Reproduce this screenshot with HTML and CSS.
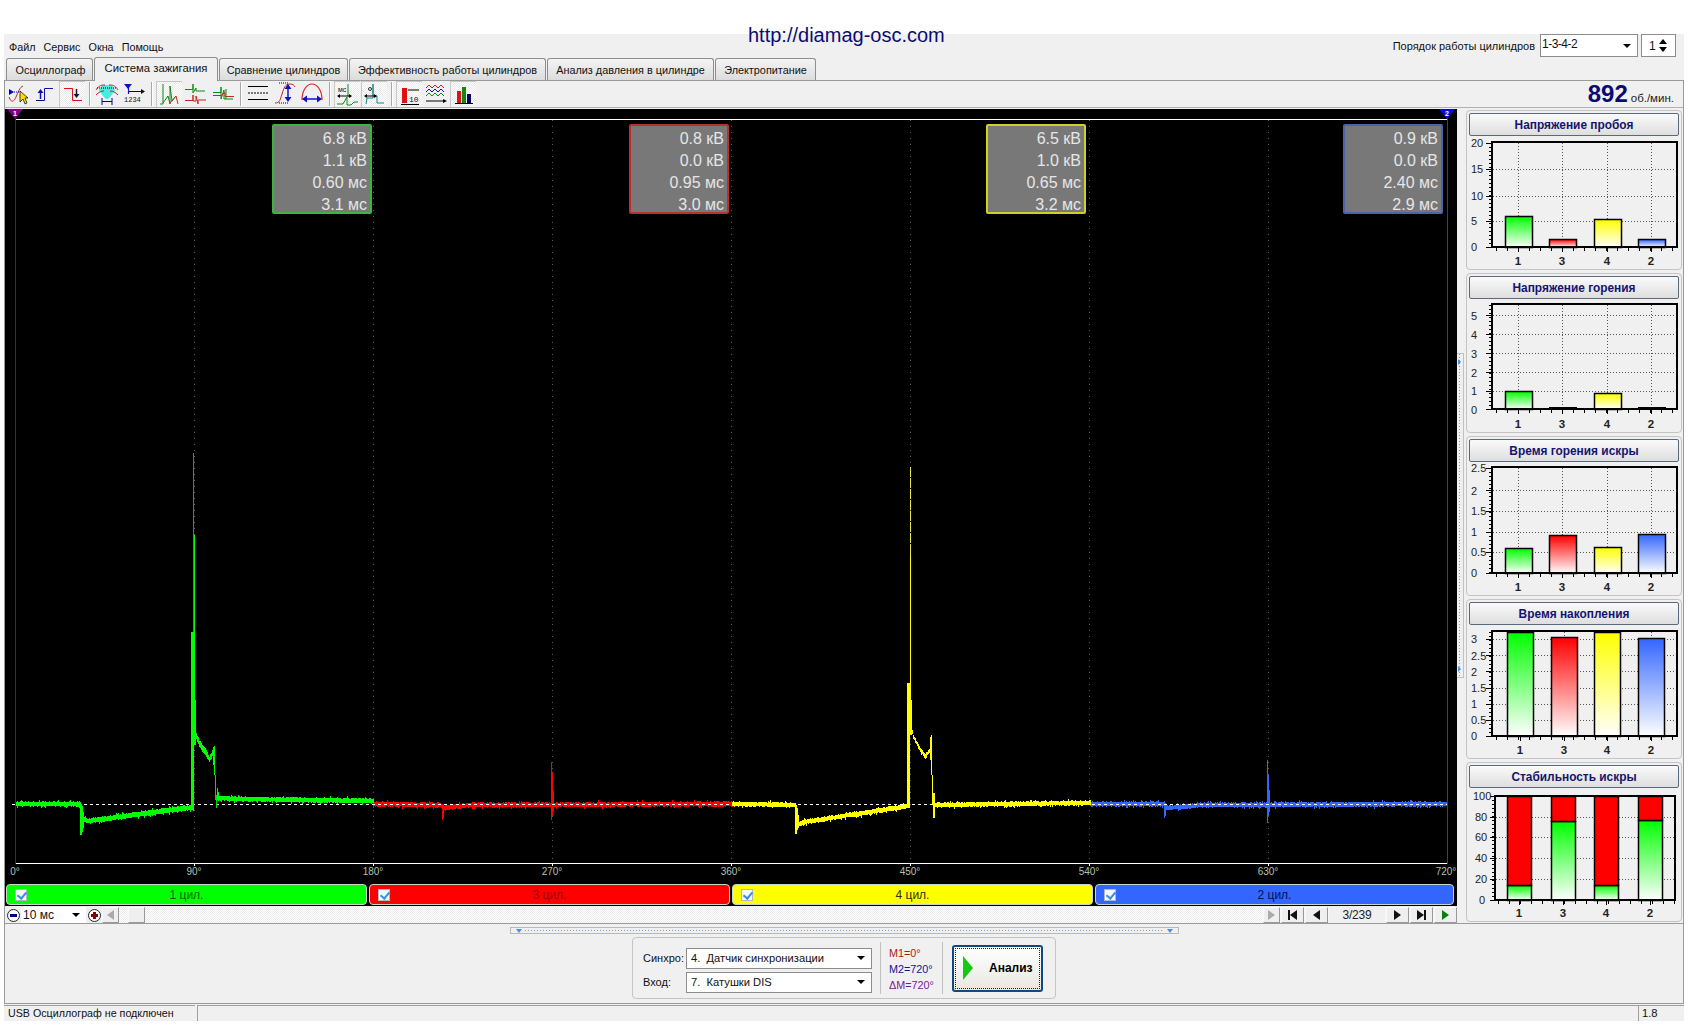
FILE: index.html
```html
<!DOCTYPE html>
<html lang="ru">
<head>
<meta charset="utf-8">
<title>Diamag</title>
<link rel="stylesheet" href="styles.css">
</head>
<body>
<div class="url">http://diamag-osc.com</div>
<div class="app">
  <div class="topbar">
    <nav class="menu"><span>Файл</span><span>Сервис</span><span>Окна</span><span>Помощь</span></nav>
    <div class="order">
      <span class="order-label">Порядок работы цилиндров</span>
      <div class="combo order-combo"><span>1-3-4-2</span><i class="caret"></i></div>
      <div class="spin"><span>1</span><i class="spin-arrows"></i></div>
    </div>
  </div>
  <div class="tabs">
    <div class="tab t1">Осциллограф</div>
    <div class="tab t2 active">Система зажигания</div>
    <div class="tab t3">Сравнение цилиндров</div>
    <div class="tab t4">Эффективность работы цилиндров</div>
    <div class="tab t5">Анализ давления в цилиндре</div>
    <div class="tab t6">Электропитание</div>
  </div>
  <div class="frame">
    <div class="toolbar">
      <div class="tools">
        <button class="tool"><svg viewBox="0 0 24 24"><path d="M3 16c2 6 5 5 7 0s4-10 7-11" stroke="#c22" fill="none"/><path d="M3 8l5 3-5 3z" fill="#00c"/><path d="M8 11h7" stroke="#00c" stroke-dasharray="1 1"/><path d="M14 10v11l3-3 2 5 2-1-2-5h3z" fill="#fd0" stroke="#000" stroke-width=".7"/></svg></button>
        <button class="tool"><svg viewBox="0 0 24 24"><path d="M4 19.500h7.500V7.500H20" stroke="#11a" fill="none"/><path d="M7.500 18V11" stroke="#11a" stroke-width="1.500"/><path d="M4.500 12l3-4 3 4z" fill="#11a"/><path d="M3 19.500h6" stroke="#006" stroke-width="1"/></svg></button>
        <button class="tool on"><svg viewBox="0 0 24 24"><path d="M3 6.500h8.500v12H21" stroke="#d11" fill="none"/><path d="M15.500 7v6" stroke="#114" stroke-width="1.500"/><path d="M12.500 12l3 4 3-4z" fill="#114"/></svg></button>
        <i class="sep"></i>
        <button class="tool"><svg viewBox="0 0 24 24"><path d="M7 4h10l3 5-4 6-3 3h-2l-3-3-4-6z" fill="#4fe8e0"/><path d="M1 9c3-5 6-5 9-5M23 9c-3-5-6-5-9-5M1 14c3-3 5-4 8-4M23 14c-3-3-5-4-8-4" stroke="#c22" fill="none"/><path d="M2 7h20" stroke="#000" stroke-dasharray="1 1"/><path d="M7 20.500h10" stroke="#00a"/><path d="M7 17v7M17 17v7" stroke="#00a"/></svg></button>
        <button class="tool"><svg viewBox="0 0 24 24"><path d="M2 3h8l-4 5z" fill="#11c"/><path d="M6.500 6v7" stroke="#11c" stroke-width="1.200"/><path d="M7 10.500h12" stroke="#111"/><path d="M19 8l4 2.500-4 2.500z" fill="#111"/><text class="tool-num" x="2" y="21">1234</text></svg></button>
        <i class="sep"></i>
        <button class="tool on"><svg viewBox="0 0 24 24"><path d="M2 22h3V2" stroke="#181" fill="none"/><path d="M5 21l5-7 2 8V4l2 15 4-5" stroke="#181" fill="none"/><path d="M12 21l6-7 2 8" stroke="#c22" fill="none"/></svg></button>
        <button class="tool"><svg viewBox="0 0 24 24"><path d="M1 8.500h8V3v9l3-5v3h9" stroke="#181" fill="none"/><path d="M1 19.500h8V14v6h3v-5l2 8v-4h8" stroke="#c22" fill="none"/></svg></button>
        <button class="tool"><svg viewBox="0 0 24 24"><path d="M2 11.500h8V6v12l3-9v9h9" stroke="#181" fill="none"/><path d="M2 14.500h8l4-3v4h9" stroke="#c22" fill="none"/><path d="M15 8v10" stroke="#181"/></svg></button>
        <i class="sep"></i>
        <button class="tool"><svg viewBox="0 0 24 24"><path d="M2 5.500h20M2 18.500h20" stroke="#000" stroke-width="1.200"/><path d="M2 12h20" stroke="#000" stroke-dasharray="2 1"/></svg></button>
        <button class="tool"><svg viewBox="0 0 24 24"><path d="M2 22c5 0 5-3 7-9s3-10 8-10c3 0 4 1 5 3" stroke="#c22" fill="none"/><path d="M6 2h10M6 22h10" stroke="#000" stroke-dasharray="1 1"/><path d="M15 7v10" stroke="#11c" stroke-width="1.500"/><path d="M11.500 8L15 3l3.500 5zM11.500 16L15 21l3.500-5z" fill="#11c"/></svg></button>
        <button class="tool"><svg viewBox="0 0 24 24"><path d="M2 19C2 9 7 3 12 3s10 6 10 16" stroke="#d22" stroke-width="1.200" fill="none"/><path d="M6 18h12" stroke="#11c" stroke-width="1.500"/><path d="M7 14.500L2 18l5 3.500zM17 14.500L22 18l-5 3.500z" fill="#11c"/></svg></button>
        <i class="sep"></i>
        <button class="tool on"><svg viewBox="0 0 24 24"><path d="M1 22h6l4-7v8h4l3-3h4" stroke="#181" fill="none"/><path d="M12 2v12h3" stroke="#181" fill="none"/><path d="M2 14h13" stroke="#000"/><path d="M1 14l3-2v4zM16 14l-3-2v4z" fill="#000"/><text class="tool-ms" x="2" y="10">мс</text></svg></button>
        <button class="tool on"><svg viewBox="0 0 24 24"><path d="M3 22l1-6h6V2v12h4v7h7" stroke="#188" fill="none"/><path d="M2 14h11" stroke="#000"/><path d="M1 14l3-2v4zM14 14l-3-2v4z" fill="#000"/><circle cx="7" cy="7" r="1.500" fill="none" stroke="#000" stroke-width=".8"/></svg></button>
        <i class="sep"></i>
        <button class="tool on"><svg viewBox="0 0 24 24"><rect x="4" y="6" width="5" height="15" fill="#d11"/><path d="M10 8h11M3 22.500h18" stroke="#000"/><text class="tool-ten" x="11" y="20">10</text></svg></button>
        <button class="tool"><svg viewBox="0 0 24 24"><path d="M2 7l3-3 3 3 3-3 3 3 3-3 3 3" stroke="#c22" fill="none"/><path d="M2 11l3-3 3 3 3-3 3 3 3-3 3 3" stroke="#11c" fill="none"/><path d="M2 15l3-3 3 3 3-3 3 3 3-3 3 3" stroke="#181" fill="none"/><path d="M2 20h18" stroke="#000"/><path d="M19 18l4 2-4 2z" fill="#000"/></svg></button>
        <button class="tool on"><svg viewBox="0 0 24 24"><rect x="5" y="9" width="4" height="12" fill="#d11"/><rect x="10" y="5" width="4" height="16" fill="#181"/><rect x="15" y="12" width="4" height="9" fill="#006"/><path d="M3 21.500h18" stroke="#000"/></svg></button>
      </div>
      <div class="rpm"><b>892</b><span>об./мин.</span></div>
    </div>
    <div class="main">
      <div class="left">
        <div class="scope">
          <svg class="plot" viewBox="5 109 1452 775">
            <g class="vgrid">
              <path d="M194.500 120V862M373.500 120V862M552.500 120V862M731.500 120V862M910.500 120V862M1089.500 120V862M1268.500 120V862"/>
            </g>
            <path class="plot-line" d="M15 119.500H1447M15 863.500H1447M194.500 863v3M373.500 863v3M552.500 863v3M731.500 863v3M910.500 863v3M1089.500 863v3M1268.500 863v3"/>
            <g id="under"></g>
            <path class="zero" d="M12 804.500H1447"/>
            <g id="over"></g>
            <path class="m1-line" d="M15.500 116V864"/>
            <path class="m2-line" d="M1447.500 116V864"/>
            <path d="M7 109h16l-8 10z" fill="#800080"/>
            <path d="M1439 109h16l-8 10z" fill="#0a0ae0"/>
            <text class="marker" x="15" y="116">1</text>
            <text class="marker" x="1447" y="116">2</text>
            <g class="deg">
              <text x="15" y="875">0°</text><text x="194" y="875">90°</text><text x="373" y="875">180°</text><text x="552" y="875">270°</text><text x="731" y="875">360°</text><text x="910" y="875">450°</text><text x="1089" y="875">540°</text><text x="1268" y="875">630°</text><text x="1446" y="875">720°</text>
            </g>
          </svg>
          <div class="readout r1"><span>6.8 кВ</span><span>1.1 кВ</span><span>0.60 мс</span><span>3.1 мс</span></div>
          <div class="readout r2"><span>0.8 кВ</span><span>0.0 кВ</span><span>0.95 мс</span><span>3.0 мс</span></div>
          <div class="readout r3"><span>6.5 кВ</span><span>1.0 кВ</span><span>0.65 мс</span><span>3.2 мс</span></div>
          <div class="readout r4"><span>0.9 кВ</span><span>0.0 кВ</span><span>2.40 мс</span><span>2.9 мс</span></div>
          <div class="cyls">
            <div class="cyl c-g"><i class="check"></i><span>1 цил.</span></div>
            <div class="cyl c-r"><i class="check"></i><span>3 цил.</span></div>
            <div class="cyl c-y"><i class="check"></i><span>4 цил.</span></div>
            <div class="cyl c-b"><i class="check"></i><span>2 цил.</span></div>
          </div>
        </div>
        <div class="scrollrow">
          <button class="round minus"><i></i></button>
          <div class="combo time-combo"><span>10 мс</span><i class="caret"></i></div>
          <button class="round plus"><i></i></button>
          <button class="nav sb"><i class="tri-l dim"></i></button>
          <div class="track"><div class="thumb"></div></div>
          <button class="nav sb"><i class="tri-r dim"></i></button>
          <button class="nav nb"><i class="bar"></i><i class="tri-l"></i></button>
          <button class="nav nb"><i class="tri-l"></i></button>
          <div class="counter">3/239</div>
          <button class="nav nb"><i class="tri-r"></i></button>
          <button class="nav nb"><i class="tri-r"></i><i class="bar"></i></button>
          <button class="nav nb"><i class="tri-r go"></i></button>
        </div>
      </div>
      <div class="vsplit"><i class="vs-a"></i><i class="vs-b"></i></div>
      <div class="charts">
        <section class="group">
          <div class="ghead">Напряжение пробоя</div>
          <svg class="chart" viewBox="1466 136 216 134">
            <defs>
              <linearGradient id="gg" x1="0" y1="0" x2="0" y2="1"><stop offset="0" stop-color="#00ff00"/><stop offset="1" stop-color="#fff"/></linearGradient>
              <linearGradient id="gr" x1="0" y1="0" x2="0" y2="1"><stop offset="0" stop-color="#ff0000"/><stop offset="1" stop-color="#fff"/></linearGradient>
              <linearGradient id="gy" x1="0" y1="0" x2="0" y2="1"><stop offset="0" stop-color="#ffff00"/><stop offset="1" stop-color="#fff"/></linearGradient>
              <linearGradient id="gb" x1="0" y1="0" x2="0" y2="1"><stop offset="0" stop-color="#3366ff"/><stop offset="1" stop-color="#fff"/></linearGradient>
            </defs>
            <path class="grid" d="M1493 169.500H1677M1493 196.500H1677M1493 221.500H1677M1518.500 143V247M1562.500 143V247M1607.500 143V247M1651.500 143V247"/>
            <path class="minor-y" d="M1490 143V247"/><path class="minor-x" d="M1496 249H1677"/>
            <path class="major" d="M1486 143h6M1486 169.500h6M1486 196.500h6M1486 221.500h6M1486 247h6M1518.500 247v5M1562.500 247v5M1607.500 247v5M1651.500 247v5"/>
            <rect class="bar-r" x="1505.500" y="216.500" width="27" height="31" fill="url(#gg)"/>
            <rect class="bar-r" x="1549.500" y="239.500" width="27" height="8" fill="url(#gr)"/>
            <rect class="bar-r" x="1594.500" y="219.500" width="27" height="28" fill="url(#gy)"/>
            <rect class="bar-r" x="1638.500" y="239.500" width="27" height="8" fill="url(#gb)"/>
            <path class="box" d="M1492 142H1677V247H1492Z"/>
            <g class="yl"><text x="1471" y="147">20</text><text x="1471" y="173">15</text><text x="1471" y="200">10</text><text x="1471" y="225">5</text><text x="1471" y="251">0</text></g>
            <g class="xl"><text x="1518" y="265">1</text><text x="1562" y="265">3</text><text x="1607" y="265">4</text><text x="1651" y="265">2</text></g>
          </svg>
        </section>
        <section class="group">
          <div class="ghead">Напряжение горения</div>
          <svg class="chart" viewBox="1466 299 216 134">
            <path class="grid" d="M1493 315.500H1677M1493 334.500H1677M1493 353.500H1677M1493 372.500H1677M1493 391.500H1677M1518.500 305V409M1562.500 305V409M1607.500 305V409M1651.500 305V409"/>
            <path class="minor-y" d="M1490 305V409"/><path class="minor-x" d="M1496 411H1677"/>
            <path class="major" d="M1486 315.500h6M1486 334.500h6M1486 353.500h6M1486 372.500h6M1486 391.500h6M1486 409h6M1518.500 409v5M1562.500 409v5M1607.500 409v5M1651.500 409v5"/>
            <rect class="bar-r" x="1505.500" y="391.500" width="27" height="18" fill="url(#gg)"/>
            <rect class="bar-r" x="1594.500" y="393.500" width="27" height="16" fill="url(#gy)"/>
            <path class="box" d="M1492 304H1677V409H1492Z"/>
            <path class="stub" d="M1549 407.500h28M1638 407.500h28"/>
            <g class="yl"><text x="1471" y="320">5</text><text x="1471" y="339">4</text><text x="1471" y="358">3</text><text x="1471" y="377">2</text><text x="1471" y="395">1</text><text x="1471" y="414">0</text></g>
            <g class="xl"><text x="1518" y="428">1</text><text x="1562" y="428">3</text><text x="1607" y="428">4</text><text x="1651" y="428">2</text></g>
          </svg>
        </section>
        <section class="group">
          <div class="ghead">Время горения искры</div>
          <svg class="chart" viewBox="1466 462 216 134">
            <path class="grid" d="M1493 490.500H1677M1493 511.500H1677M1493 532.500H1677M1493 552.500H1677M1518.500 468V573M1562.500 468V573M1607.500 468V573M1651.500 468V573"/>
            <path class="minor-y" d="M1490 468V573"/><path class="minor-x" d="M1496 575H1677"/>
            <path class="major" d="M1486 468h6M1486 490.500h6M1486 511.500h6M1486 532.500h6M1486 552.500h6M1486 573h6M1518.500 573v5M1562.500 573v5M1607.500 573v5M1651.500 573v5"/>
            <rect class="bar-r" x="1505.500" y="548.500" width="27" height="25" fill="url(#gg)"/>
            <rect class="bar-r" x="1549.500" y="535.500" width="27" height="38" fill="url(#gr)"/>
            <rect class="bar-r" x="1594.500" y="547.500" width="27" height="26" fill="url(#gy)"/>
            <rect class="bar-r" x="1638.500" y="534.500" width="27" height="39" fill="url(#gb)"/>
            <path class="box" d="M1492 467H1677V573H1492Z"/>
            <g class="yl"><text x="1471" y="472">2.5</text><text x="1471" y="495">2</text><text x="1471" y="515">1.5</text><text x="1471" y="536">1</text><text x="1471" y="556">0.5</text><text x="1471" y="577">0</text></g>
            <g class="xl"><text x="1518" y="591">1</text><text x="1562" y="591">3</text><text x="1607" y="591">4</text><text x="1651" y="591">2</text></g>
          </svg>
        </section>
        <section class="group">
          <div class="ghead">Время накопления</div>
          <svg class="chart" viewBox="1466 625 216 134">
            <path class="grid" d="M1493 639.500H1677M1493 655.500H1677M1493 671.500H1677M1493 688.500H1677M1493 704.500H1677M1493 720.500H1677M1520.500 632V736M1564.500 632V736M1607.500 632V736M1651.500 632V736"/>
            <path class="minor-y" d="M1490 632V736"/><path class="minor-x" d="M1496 738H1677"/>
            <path class="major" d="M1486 639.500h6M1486 655.500h6M1486 671.500h6M1486 688.500h6M1486 704.500h6M1486 720.500h6M1486 736h6M1520.500 736v5M1564.500 736v5M1607.500 736v5M1651.500 736v5"/>
            <rect class="bar-r" x="1507.500" y="632.500" width="26" height="104" fill="url(#gg)"/>
            <rect class="bar-r" x="1551.500" y="637.500" width="26" height="99" fill="url(#gr)"/>
            <rect class="bar-r" x="1594.500" y="632.500" width="26" height="104" fill="url(#gy)"/>
            <rect class="bar-r" x="1638.500" y="638.500" width="26" height="98" fill="url(#gb)"/>
            <path class="box" d="M1492 631H1677V736H1492Z"/>
            <g class="yl"><text x="1471" y="643">3</text><text x="1471" y="660">2.5</text><text x="1471" y="676">2</text><text x="1471" y="692">1.5</text><text x="1471" y="708">1</text><text x="1471" y="724">0.5</text><text x="1471" y="740">0</text></g>
            <g class="xl"><text x="1520" y="754">1</text><text x="1564" y="754">3</text><text x="1607" y="754">4</text><text x="1651" y="754">2</text></g>
          </svg>
        </section>
        <section class="group">
          <div class="ghead">Стабильность искры</div>
          <svg class="chart" viewBox="1466 788 216 134">
            <path class="grid" d="M1496 817.500H1675M1496 837.500H1675M1496 858.500H1675M1496 879.500H1675"/>
            <path class="minor-y" d="M1493 796V900"/><path class="minor-x" d="M1498 902H1675"/>
            <path class="major" d="M1490 796h5M1490 817.500h5M1490 837.500h5M1490 858.500h5M1490 879.500h5M1490 900h5M1519.500 900v5M1563.500 900v5M1606.500 900v5M1650.500 900v5"/>
            <rect class="bar-r" x="1507.500" y="885.500" width="24" height="15" fill="url(#gg)"/>
            <rect class="bar-r" x="1551.500" y="821.500" width="24" height="79" fill="url(#gg)"/>
            <rect class="bar-r" x="1594.500" y="885.500" width="24" height="15" fill="url(#gg)"/>
            <rect class="bar-r" x="1638.500" y="820.500" width="24" height="80" fill="url(#gg)"/>
            <rect class="bar-s" x="1507.500" y="796.500" width="24" height="89" fill="#f00"/>
            <rect class="bar-s" x="1551.500" y="796.500" width="24" height="25" fill="#f00"/>
            <rect class="bar-s" x="1594.500" y="796.500" width="24" height="89" fill="#f00"/>
            <rect class="bar-s" x="1638.500" y="796.500" width="24" height="24" fill="#f00"/>
            <path class="box" d="M1495 796H1675V900H1495Z"/>
            <g class="yl"><text x="1473" y="800">100</text><text x="1475" y="821">80</text><text x="1475" y="841">60</text><text x="1475" y="862">40</text><text x="1475" y="883">20</text><text x="1479" y="904">0</text></g>
            <g class="xl"><text x="1519" y="917">1</text><text x="1563" y="917">3</text><text x="1606" y="917">4</text><text x="1650" y="917">2</text></g>
          </svg>
        </section>
      </div>
    </div>
    <div class="bottom">
      <div class="hsplit"><i class="hs-tri"></i><i class="hs-dots"></i><i class="hs-tri"></i></div>
      <div class="controls">
        <div class="inputs">
          <div class="field"><label>Синхро:</label><div class="combo wide"><span>4.&nbsp; Датчик синхронизации</span><i class="caret"></i></div></div>
          <div class="field"><label>Вход:</label><div class="combo wide"><span>7.&nbsp; Катушки DIS</span><i class="caret"></i></div></div>
        </div>
        <div class="marks">
          <span class="m-r">M1=0°</span>
          <span class="m-b">M2=720°</span>
          <span class="m-p">ΔM=720°</span>
        </div>
        <button class="analyze"><i class="play"></i><b>Анализ</b></button>
      </div>
    </div>
  </div>
  <div class="status">
    <div class="cell s1">USB Осциллограф не подключен</div>
    <div class="cell s2"></div>
    <div class="cell s3">1.8</div>
  </div>
</div>
<script src="script.js"></script>
</body>
</html>
```
FILE: styles.css
```css
* { box-sizing: border-box; }
html, body { margin: 0; padding: 0; }
body { background: #fff; font-family: "Liberation Sans", Arial, sans-serif; font-size: 11px; color: #111; width: 1696px; height: 1026px; overflow: hidden; position: relative; }
button { font: inherit; padding: 0; margin: 0; }
.url { position: absolute; left: 748px; top: 23px; font-size: 20px; line-height: 24px; color: #0c0c70; z-index: 5; }
.app { margin: 34px 0 0 4px; width: 1680px; height: 987px; background: #f0f0f0; display: flex; flex-direction: column; }

.topbar { height: 24px; display: flex; justify-content: space-between; flex: none; }
.menu { display: flex; align-items: center; padding: 0 0 0 5px; gap: 8px; height: 26px; font-size: 10.800px; }
.order { display: flex; align-items: flex-start; padding-right: 8px; }
.order-label { margin: 5px 5px 0 0; line-height: 14px; color: #111; }
.combo { background: #fff; border: 1px solid #8c8c8c; display: flex; align-items: center; justify-content: space-between; padding: 0 6px 0 3px; }
.order-combo { width: 98px; height: 23px; font-size: 12px; letter-spacing: -.5px; align-items: flex-start; padding: 1px 6px 0 1px; line-height: 16px; }
.order-combo .caret { margin-top: 8px; }
.caret { width: 0; height: 0; border: 4px solid transparent; border-top: 4px solid #000; border-bottom: 0; display: block; }
.spin { width: 35px; height: 23px; margin-left: 3px; background: #fff; border: 1px solid #8c8c8c; display: flex; align-items: center; justify-content: space-between; padding: 0 7px 0 7px; font-size: 12px; }
.spin-arrows { width: 9px; height: 13px; display: flex; flex-direction: column; justify-content: space-between; }
.spin-arrows::before { content: ""; width: 0; height: 0; border: 4px solid transparent; border-bottom: 5px solid #000; border-top: 0; }
.spin-arrows::after { content: ""; width: 0; height: 0; border: 4px solid transparent; border-top: 5px solid #000; border-bottom: 0; }

.tabs { height: 22px; display: flex; padding-left: 2px; gap: 1px; flex: none; position: relative; z-index: 2; align-items: flex-end; }
.tab { height: 22px; border: 1px solid #8e8e8e; border-bottom: 0; border-radius: 3px 3px 0 0; background: linear-gradient(#f4f4f4, #dcdcdc); display: flex; align-items: center; justify-content: center; font-size: 10.850px; }
.tab.active { height: 24px; background: #f0f0f0; margin-bottom: -1px; padding-bottom: 3px; font-size: 11.300px; }
.t1 { width: 87px; padding-left: 2px; } .t2 { width: 124px; } .t3 { width: 129px; } .t4 { width: 197px; } .t5 { width: 167px; } .t6 { width: 101px; }

.frame { height: 924px; flex: none; border: 1px solid #9a9a9a; display: flex; flex-direction: column; }
.toolbar { height: 27px; flex: none; border-bottom: 1px solid #b0b0b0; display: flex; justify-content: space-between; }
.tools { display: flex; height: 26px; }
.tool { width: 26px; height: 26px; border: 0; margin-right: 1px; padding-bottom: 2px; background: transparent; display: flex; align-items: center; justify-content: center; }
.tool svg { width: 24px; height: 24px; display: block; flex: none; }
.tool.on { background: repeating-conic-gradient(#fff 0 25%, #eaeaea 0 50%) 0 0/2px 2px; border-top: 1px solid #c8c8c8; border-left: 1px solid #c8c8c8; }
.tool-num { font: 7px "Liberation Mono", monospace; fill: #111; }
.tool-ms { font: 7px "Liberation Sans", sans-serif; fill: #111; }
.tool-ten { font: 8px "Liberation Mono", monospace; fill: #111; }
.sep { width: 2px; height: 24px; margin: 1px 3px; border-left: 1px solid #a8a8a8; border-right: 1px solid #fff; display: block; }
.rpm { display: flex; align-items: baseline; padding-right: 9px; color: #0a0a70; line-height: 26px; }
.rpm b { font-size: 24px; }
.rpm span { font-size: 11.500px; margin-left: 3px; color: #222; }

.main { height: 816px; flex: none; border-bottom: 1px solid #9a9a9a; display: flex; align-items: flex-start; }
.left { width: 1452px; flex: none; padding-top: 1px; }
.scope { position: relative; height: 797px; background: #000; }
.plot { display: block; width: 1452px; height: 775px; }
.vgrid path { stroke: #5c5c5c; stroke-width: 1; stroke-dasharray: 1 5; fill: none; }
.plot-line { stroke: #fff; stroke-width: 1; fill: none; shape-rendering: crispEdges; }
.zero { stroke: #fff; stroke-width: 1; stroke-dasharray: 3 3; fill: none; shape-rendering: crispEdges; }
.m1-line { stroke: #800080; fill: none; shape-rendering: crispEdges; }
.m2-line { stroke: #2a2aff; fill: none; shape-rendering: crispEdges; }
.marker { font: bold 7px "Liberation Sans", sans-serif; fill: #fff; text-anchor: middle; }
.deg text { font: 10px "Liberation Sans", sans-serif; fill: #b4c0b4; text-anchor: middle; }
.trace { fill: none; shape-rendering: crispEdges; stroke-width: 1; }

.readout { position: absolute; top: 15px; width: 100px; height: 90px; background: #787878; border: 2px solid; border-radius: 2px; display: flex; flex-direction: column; align-items: flex-end; padding: 2px 3px 0 0; color: #e6e6e6; font-size: 16px; line-height: 21.900px; }
.r1 { left: 267px; border-color: #38b838; }
.r2 { left: 624px; border-color: #b83030; }
.r3 { left: 981px; border-color: #d0d020; }
.r4 { left: 1338px; border-color: #4a62b0; }

.cyls { display: grid; grid-template-columns: 361px 361px 361px 359px; gap: 2px; padding-left: 1px; height: 22px; }
.cyl { height: 21px; border-radius: 4px; border: 1px solid #c8d8c8; position: relative; display: flex; align-items: center; justify-content: center; font-size: 12px; }
.c-g { background: #00ff00; color: #006000; }
.c-r { background: #ff0000; color: #a00000; }
.c-y { background: #ffff00; color: #303000; }
.c-b { background: #3366ff; color: #001050; }
.check { position: absolute; left: 8px; top: 4px; width: 12px; height: 12px; background: #f4f8ff; border: 1px solid #b0b8c8; }
.check::after { content: ""; position: absolute; left: 3px; top: 0; width: 4px; height: 7px; border: solid #3d8fe0; border-width: 0 2px 2px 0; transform: rotate(40deg); }

.scrollrow { margin-top: 1px; height: 16px; display: flex; align-items: stretch; background: repeating-conic-gradient(#fff 0 25%, #ececec 0 50%) 0 0/2px 2px; }
.round { width: 16px; height: 16px; border: 0; background: #efefef; display: flex; align-items: center; justify-content: center; }
.round i { display: block; width: 13px; height: 13px; border-radius: 50%; border: 1px solid #222; position: relative; background: #fff; }
.round i::before { content: ""; position: absolute; left: 2px; top: 4px; width: 7px; height: 3px; background: #00007a; }
.plus i::before { background: #8a0000; }
.plus i::after { content: ""; position: absolute; left: 4px; top: 2px; width: 3px; height: 7px; background: #8a0000; }
.time-combo { width: 65px; height: 16px; border: 0; background: #fff; padding: 0 6px 0 2px; font-size: 12px; }
.nav { height: 16px; background: #efefef; border: 1px solid; border-color: #fafafa #999 #999 #fafafa; display: flex; align-items: center; justify-content: center; flex: none; }
.sb { width: 17px; }
.track { flex: 1; position: relative; }
.thumb { position: absolute; left: 9px; top: 0; width: 17px; height: 16px; background: #efefef; border: 1px solid; border-color: #fafafa #999 #999 #fafafa; }
.nb { width: 23px; margin-left: 1px; }
.tri-l { width: 0; height: 0; border: 5px solid transparent; border-right: 7px solid #111; border-left: 0; display: block; }
.tri-r { width: 0; height: 0; border: 5px solid transparent; border-left: 7px solid #111; border-right: 0; display: block; }
.tri-l.dim { border-right-color: #aaa; }
.tri-r.dim { border-left-color: #aaa; }
.tri-r.go { border-left-color: #0c800c; }
.bar { width: 2px; height: 10px; background: #111; display: block; }
.counter { width: 56px; margin-left: 1px; background: #f0f0f0; text-align: center; font-size: 12px; letter-spacing: -.2px; line-height: 16px; color: #222; }

.vsplit { width: 7px; height: 325px; margin-top: 245px; flex: none; border: 1px solid #c0c0c0; border-left: 0; position: relative; background: linear-gradient(#6aa0e0 50%, transparent 50%) 2px 0/1px 3px repeat-y; }
.vs-a, .vs-b { position: absolute; left: 1px; width: 0; height: 0; border: 3px solid transparent; border-left: 3px solid #4a90e0; border-right: 0; display: block; }
.vs-a { top: 5px; } .vs-b { bottom: 5px; }

.charts { width: 216px; margin: 2px 0 0 2px; flex: none; display: flex; flex-direction: column; gap: 3px; }
.group { height: 160px; border: 1px solid #c4c4c4; border-radius: 4px; padding: 2px 2px 0; }
.ghead { height: 23px; border: 1px solid #5a6a7a; border-radius: 2px; background: linear-gradient(#fafafa, #dedede); display: flex; align-items: center; justify-content: center; font-size: 11.900px; font-weight: 700; color: #15156e; }
.chart { display: block; width: 216px; height: 134px; margin: 0 -3px; overflow: visible; }
.grid { stroke: #555; stroke-width: 1; stroke-dasharray: 1 2; fill: none; shape-rendering: crispEdges; }
.minor-y { stroke: #000; stroke-width: 3; stroke-dasharray: 1 3; fill: none; shape-rendering: crispEdges; }
.minor-x { stroke: #000; stroke-width: 3; stroke-dasharray: 1 10; fill: none; shape-rendering: crispEdges; }
.major { stroke: #000; stroke-width: 1; fill: none; shape-rendering: crispEdges; }
.stub { stroke: #000; stroke-width: 1; fill: none; shape-rendering: crispEdges; }
.bar-r, .bar-s { stroke: #000; stroke-width: 1.500; }
.box { fill: none; stroke: #000; stroke-width: 2; }
.yl text { font: 11px "Liberation Sans", sans-serif; fill: #222; }
.xl text { font: bold 11.500px "Liberation Sans", sans-serif; fill: #222; text-anchor: middle; }

.bottom { flex: 1; display: flex; flex-direction: column; align-items: center; padding-top: 3px; }
.hsplit { width: 669px; height: 7px; border: 1px solid #b8b8b8; display: flex; align-items: center; gap: 3px; padding: 0 5px; flex: none; }
.hs-tri { width: 0; height: 0; border: 3px solid transparent; border-top: 4px solid #4a90e0; border-bottom: 0; display: block; flex: none; }
.hs-dots { flex: 1; height: 1px; background: repeating-linear-gradient(90deg, #6aa0e0 0 1px, transparent 1px 3px); display: block; }
.controls { margin-top: 3px; width: 424px; height: 62px; border: 1px solid #c4c4c4; border-radius: 4px; display: flex; align-items: center; flex: none; }
.inputs { display: flex; flex-direction: column; gap: 3px; padding: 4px 0 0 10px; }
.field { display: flex; align-items: center; }
.field label { width: 43px; font-size: 11px; }
.wide { width: 186px; height: 21px; font-size: 11.200px; padding: 0 6px 0 4px; }
.marks { height: 52px; width: 63px; margin-left: 8px; padding: 4px 0 1px 8px; border-left: 1px solid #c0c0c0; border-right: 1px solid #c0c0c0; display: flex; flex-direction: column; justify-content: space-between; font-size: 10.800px; line-height: 15px; white-space: nowrap; overflow: hidden; }
.m-r { color: #b01818; } .m-b { color: #10109a; } .m-p { color: #7a1a8a; }
.analyze { width: 91px; height: 47px; margin-left: 9px; border: 2px solid #0e4a80; border-radius: 3px; background: linear-gradient(#fff, #e8e8e0); outline: 1px dotted #222; outline-offset: -4px; display: flex; align-items: center; font-size: 12px; color: #000; }
.play { width: 0; height: 0; border: 12px solid transparent; border-left: 10px solid #14c814; border-right: 0; margin-left: 9px; display: block; }
.analyze b { margin-left: 16px; }

.status { display: flex; height: 17px; flex: none; margin-top: 1px; }
.cell { height: 16px; border-top: 1px solid #a0a0a0; border-left: 1px solid #a0a0a0; font-size: 10.700px; line-height: 15px; padding-left: 3px; white-space: nowrap; }
.s1 { width: 191px; border-left: 0; padding-left: 4px; }
.s2 { width: 1441px; margin-left: 2px; }
.s3 { width: 46px; font-size: 11.200px; }
```
FILE: script.js
```js
// Draws the four cylinder traces as pixel columns from a few measured knots.
(function () {
  var NS = 'http://www.w3.org/2000/svg';
  var seed = 12345;
  function rnd() { seed = (seed * 1103515245 + 12345) & 0x7fffffff; return seed / 0x7fffffff; }

  function at(knots, x) {
    for (var i = 1; i < knots.length; i++) {
      if (x <= knots[i][0]) {
        var a = knots[i - 1], b = knots[i];
        return a[1] + (b[1] - a[1]) * (x - a[0]) / ((b[0] - a[0]) || 1);
      }
    }
    return knots[knots.length - 1][1];
  }

  function columns(knots, half, jitter) {
    var d = '';
    for (var x = knots[0][0]; x <= knots[knots.length - 1][0]; x++) {
      var y = at(knots, x);
      var up = half + rnd() * jitter + (rnd() > 0.93 ? 1.5 : 0);
      var dn = half + rnd() * jitter + (rnd() > 0.93 ? 1.5 : 0);
      d += 'M' + (x + 0.5) + ' ' + Math.round(y - up) + 'V' + Math.round(y + dn);
    }
    return d;
  }

  function add(parent, color, d, opacity) {
    var p = document.createElementNS(NS, 'path');
    p.setAttribute('class', 'trace');
    p.setAttribute('stroke', color);
    if (opacity) p.setAttribute('opacity', opacity);
    p.setAttribute('d', d);
    parent.appendChild(p);
  }

  var under = document.getElementById('under');
  var over = document.getElementById('over');

  // red, cylinder 3
  add(under, '#ff0000', columns([[373, 804], [440, 805], [444, 808], [470, 805], [732, 804]], 1.8, 1));
  add(under, '#ff0000', 'M442.500 804V820M443.500 804V818M551.500 762V820M552.500 772V816M553.500 790V812');

  // blue, cylinder 2
  add(under, '#3366ff', columns([[1090, 804], [1164, 804], [1167, 808], [1200, 805], [1447, 804]], 1.8, 1));
  add(under, '#3366ff', 'M1164.500 804V818M1165.500 804V816M1267.500 760V823M1268.500 775V816M1269.500 790V812');

  // green, cylinder 1
  add(over, '#00ff00', columns([[16, 804], [80, 804]], 1.8, 1));
  add(over, '#00ff00', columns([[82, 819], [88, 821], [193, 807]], 2, 1));
  add(over, '#00ff00', 'M80.500 804V835M81.500 804V835M82.500 806V832M83.500 812V828');
  add(over, '#00ff00', columns([[195, 733], [199, 744], [205, 752], [209, 759], [214, 751]], 2.2, 1.8));
  add(over, '#00ff00', 'M213.500 747V765M214.500 747V775');
  add(over, '#00e000', 'M215.500 775V800M216.500 795V808');
  add(over, '#00ff00', 'M217.500 788V800M218.500 792V800');
  add(over, '#00ff00', columns([[218, 798], [240, 799], [373, 801]], 1.8, 1));
  add(over, '#00ff00', 'M191.500 632V807M192.500 632V807M193.500 632V807M194.500 535V745M195.500 700V745');
  add(over, '#00d000', 'M193.500 453V632', 0.9);

  // yellow, cylinder 4
  add(over, '#ffff00', columns([[732, 804], [795, 805]], 1.8, 1));
  add(over, '#ffff00', columns([[798, 824], [804, 822], [908, 806]], 1.8, 1));
  add(over, '#ffff00', 'M795.500 805V834M796.500 805V834M797.500 808V830M798.500 815V828');
  add(over, '#ffff00', columns([[911, 727], [913, 737], [920, 750], [925, 756], [930, 750], [931, 737]], 1.6, 0.8));
  add(over, '#ffff00', 'M930.500 737V760M931.500 737V775M932.500 775V805');
  add(over, '#ffff00', 'M933.500 793V818M934.500 793V818');
  add(over, '#ffff00', columns([[935, 805], [1000, 804], [1090, 803]], 1.8, 1));
  add(over, '#ffff00', 'M907.500 683V808M908.500 683V808M909.500 683V808M910.500 557V735M911.500 700V735');
  add(over, '#e8e840', 'M910.500 467V477M910.500 478V488M910.500 489V499M910.500 500V510M910.500 511V521M910.500 522V532M910.500 533V543M910.500 544V557');
})();
```
